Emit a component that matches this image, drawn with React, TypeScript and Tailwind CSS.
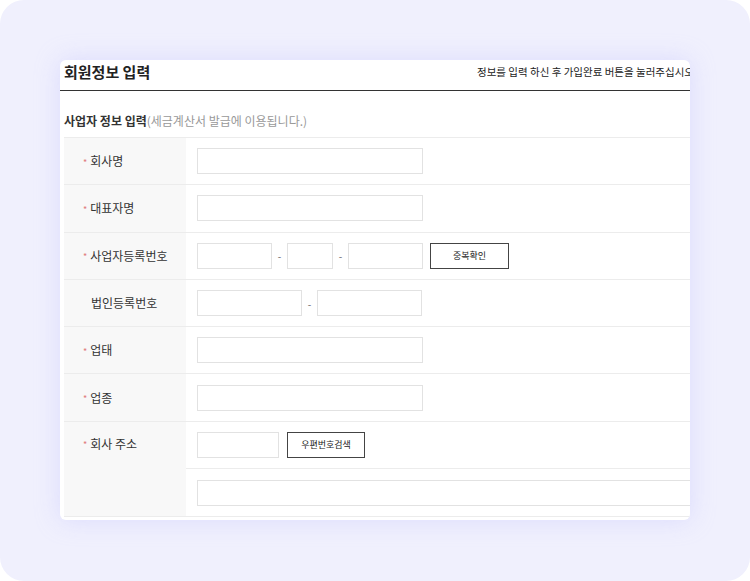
import React from "react";

const font = { fontFamily: '"Noto Sans CJK KR", "Noto Sans", sans-serif' };

function Star() {
  return <span className="text-[#e07a7a] text-[9px] mr-[3px] leading-none relative top-[1px]">*</span>;
}

function Input({ w }: { w: string }) {
  return <div className={`${w} h-[26px] border border-[#e2e2e2] bg-white shrink-0`} />;
}

function Btn({ children, w }: { children: React.ReactNode; w: string }) {
  return (
    <div className={`${w} h-[26px] border border-[#444] bg-white flex items-center justify-center text-[9px] text-[#222] shrink-0`}>
      {children}
    </div>
  );
}

function Dash() {
  return <span className="w-[15px] text-center text-[10px] text-[#666] shrink-0">-</span>;
}

function Row({ label, star = true, children }: { label: string; star?: boolean; children: React.ReactNode }) {
  return (
    <div className="flex h-[47.3px] border-b border-[#ececec]">
      <div className="w-[122px] shrink-0 bg-[#f8f8f8] flex items-center pl-[19px] text-[12px] text-[#333]">
        {star ? <Star /> : <span className="w-[8px]" />}
        {label}
      </div>
      <div className="flex-1 flex items-center pl-[11px] gap-0">{children}</div>
    </div>
  );
}

export default function App() {
  return (
    <div className="w-[750px] h-[581px] bg-white" style={font}>
      <div className="w-[750px] h-[581px] rounded-[24px] bg-[#f0f0fd] pt-[60px] pl-[60px]">
        <div className="w-[630px] h-[460px] bg-white rounded-[6px] shadow-[0_0_24px_rgba(210,210,255,0.7)] overflow-hidden">
          <div className="h-[31px] border-b border-[#333] flex items-start justify-between pl-[4px] pt-[1px]">
            <div className="text-[15px] font-bold text-[#222] leading-[22px]">회원정보 입력</div>
            <div className="text-[10.5px] text-[#222] leading-[20px] whitespace-nowrap mt-[1px] mr-[-4px]">
              정보를 입력 하신 후 가입완료 버튼을 눌러주십시오
            </div>
          </div>
          <div className="pl-[4px]">
            <div className="h-[46px] flex items-end pb-[7px] text-[12px] whitespace-nowrap">
              <span className="font-bold text-[#333]">사업자 정보 입력</span>
              <span className="text-[#999]">(세금계산서 발급에 이용됩니다.)</span>
            </div>
            <div className="border-t border-[#ececec]">
              <Row label="회사명">
                <Input w="w-[226px]" />
              </Row>
              <Row label="대표자명">
                <Input w="w-[226px]" />
              </Row>
              <Row label="사업자등록번호">
                <Input w="w-[75px]" />
                <Dash />
                <Input w="w-[46px]" />
                <Dash />
                <Input w="w-[75px]" />
                <div className="w-[7px]" />
                <Btn w="w-[79px]">중복확인</Btn>
              </Row>
              <Row label="법인등록번호" star={false}>
                <Input w="w-[105px]" />
                <Dash />
                <Input w="w-[105px]" />
              </Row>
              <Row label="업태">
                <Input w="w-[226px]" />
              </Row>
              <Row label="업종">
                <Input w="w-[226px]" />
              </Row>
              <div className="flex border-b border-[#ececec]">
                <div className="w-[122px] shrink-0 bg-[#f8f8f8] flex items-start pt-[13px] pl-[19px] text-[12px] text-[#333]">
                  <span className="flex items-center">
                    <Star />
                    회사 주소
                  </span>
                </div>
                <div className="flex-1 flex flex-col">
                  <div className="h-[47.3px] border-b border-[#ececec] flex items-center pl-[11px]">
                    <Input w="w-[82px]" />
                    <div className="w-[8px]" />
                    <Btn w="w-[78px]">우편번호검색</Btn>
                  </div>
                  <div className="h-[47px] flex items-center pl-[11px]">
                    <Input w="w-[520px]" />
                  </div>
                </div>
              </div>
            </div>
          </div>
        </div>
      </div>
    </div>
  );
}
